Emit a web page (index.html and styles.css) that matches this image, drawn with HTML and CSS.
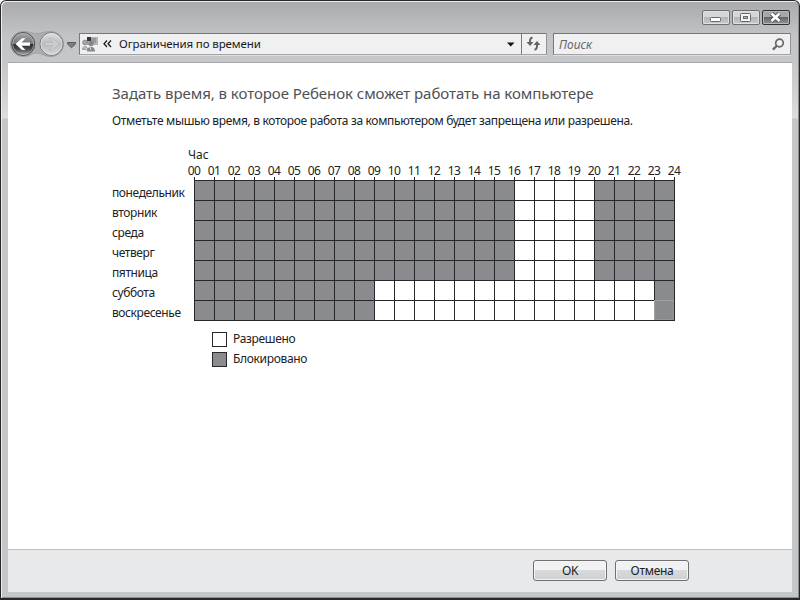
FILE: index.html
```html
<!DOCTYPE html>
<html lang="ru">
<head>
<meta charset="utf-8">
<title>Ограничения по времени</title>
<link rel="stylesheet" href="styles.css">
</head>
<body>
<div class="window">
  <header class="titlebar">
    <div class="caption">
      <button class="cap"><svg width="28" height="15"><rect x="8.500" y="7.500" width="10" height="4" rx="1" fill="#fff" stroke="#66676a"/></svg></button>
      <button class="cap"><svg width="28" height="15"><rect x="8.500" y="3.500" width="10" height="8" rx="1" fill="#f4f4f5" stroke="#66676a"/><rect x="11.500" y="6.500" width="4" height="2" fill="#bbb" stroke="#66676a"/></svg></button>
      <button class="cap close"><svg width="28" height="15"><path d="M9.500 3.500 17.500 11M17.500 3.500 9.500 11" stroke="#55565a" stroke-width="4.500"/><path d="M9.500 3.500 17.500 11M17.500 3.500 9.500 11" stroke="#fff" stroke-width="2.600"/></svg></button>
    </div>
    <div class="navbar">
      <svg class="nav" width="70" height="28" viewBox="8 30 70 28">
        <defs>
          <linearGradient id="back" x2="0" y2="1"><stop offset="0" stop-color="#a5a6a9"/><stop offset=".48" stop-color="#77787c"/><stop offset=".5" stop-color="#252629"/><stop offset=".75" stop-color="#515256"/><stop offset="1" stop-color="#b5b6b9"/></linearGradient>
          <linearGradient id="fwd" x2="0" y2="1"><stop offset="0" stop-color="#dedfe0"/><stop offset=".5" stop-color="#bcbdbf"/><stop offset="1" stop-color="#d6d7d9"/></linearGradient>
        </defs>
        <path d="M23 31.500C30 31.500 32 33.500 37 33.500S44 31.500 51 31.500A12.500 12.500 0 0 1 51 56.500C44 56.500 42 53 37 53S30 56.500 23 56.500A12.500 12.500 0 0 1 23 31.500Z" fill="#adaeb1" stroke="#9fa0a3"/>
        <circle cx="23.200" cy="44" r="11.500" fill="url(#back)" stroke="#4e4f53"/>
        <circle cx="23.200" cy="44" r="10.500" fill="none" stroke="#c4c5c8" stroke-opacity=".6"/>
        <circle cx="51.500" cy="44" r="11.500" fill="url(#fwd)" stroke="#77787b"/>
        <circle cx="51.500" cy="44" r="10.500" fill="none" stroke="#e4e4e5" stroke-opacity=".8"/>
        <path d="M15.500 44 22 38.300H25.500L21.500 42.500H30V45.700H21.500L25.500 50H22Z" fill="#fff"/>
        <path d="M59 44 52.500 38.300H49L53 42.500H44.500V45.700H53L49 50H52.500Z" fill="#cdced0" stroke="#b2b3b5" stroke-width=".7"/>
        <path d="M67.500 42.500H75.500V44L71.500 47.700 67.500 44Z" fill="#7d7e81" stroke="#595a5e"/>
      </svg>
      <div class="address">
        <svg class="users" width="18" height="17" viewBox="0 0 18 17"><rect x="6" y="1" width="11" height="8" fill="#b4b5b8"/><rect x="9" y="2" width="6" height="5" fill="#97989b"/><path d="M6 1H10V5H6Z" fill="#333438"/><circle cx="4" cy="6.500" r="2.500" fill="#a2a3a6" stroke="#85868a" stroke-width=".7"/><circle cx="10" cy="7.500" r="2.600" fill="#85868a"/><path d="M1 14C1 8.500 7 8.500 7.500 14Z" fill="#a2a3a6"/><path d="M6 15.500C6 9 14 9 14 15.500Z" fill="#85868a"/><path d="M3 10.500 5 13 7 11M9 11 10 14" stroke="#d6d7d9" fill="none"/></svg>
        <svg class="chev" width="9" height="8"><path d="M4 .5 1 3.700 4 7M8 .5 5 3.700 8 7" fill="none" stroke="#222" stroke-width="1.300"/></svg>
        <span class="crumb">Ограничения по времени</span>
        <svg class="drop" width="8" height="5"><path d="M0 .5H7.500L3.750 4.500Z" fill="#111"/></svg>
        <span class="refresh"><svg width="16" height="16" viewBox="0 0 16 16"><path d="M6.500 1.500Q4 2 4 5V7" fill="none" stroke="#626367" stroke-width="1.900"/><path d="M.5 6H7.500L4 10Z" fill="#626367"/><path d="M8.500 13.700Q11 13.500 11 10V8" fill="none" stroke="#626367" stroke-width="1.900"/><path d="M7.500 9H14.500L11 5Z" fill="#626367"/></svg></span>
      </div>
      <div class="search"><span>Поиск</span><svg width="14" height="14" viewBox="0 0 14 14"><circle cx="8.500" cy="5" r="3.800" fill="#f3f3f4" stroke="#67686c" stroke-width="1.700"/><path d="M5.800 7.700 1.900 11.600" stroke="#67686c" stroke-width="2.300"/></svg></div>
    </div>
  </header>
  <main class="page">
    <h1>Задать время, в которое Ребенок сможет работать на компьютере</h1>
    <p class="hint">Отметьте мышью время, в которое работа за компьютером будет запрещена или разрешена.</p>
    <div class="axis">Час</div>
    <div class="hours" id="hours"></div>
    <div class="schedule">
      <div class="days"><span>понедельник</span><span>вторник</span><span>среда</span><span>четверг</span><span>пятница</span><span>суббота</span><span>воскресенье</span></div>
      <div>
        <div class="ticks" id="ticks"></div>
        <div class="grid" id="grid"></div>
      </div>
    </div>
    <div class="legend"><i></i><span>Разрешено</span></div>
    <div class="legend"><i class="blocked"></i><span>Блокировано</span></div>
  </main>
  <footer class="actions"><button class="btn">OK</button><button class="btn">Отмена</button></footer>
</div>
<script src="schedule.js"></script>
</body>
</html>
```
FILE: schedule.js
```js
const allowed = [[16, 20], [16, 20], [16, 20], [16, 20], [16, 20], [9, 23], [9, 23]];
const add = (id, cls, text) => {
  const el = document.createElement('span');
  el.className = cls;
  if (text) el.textContent = text;
  document.getElementById(id).append(el);
};
for (let h = 0; h <= 24; h++) {
  add('hours', 'hour', String(h).padStart(2, '0'));
  add('ticks', 'tick');
}
allowed.forEach(([from, to], day) => {
  for (let h = 0; h < 24; h++) {
    const open = h >= from && h < to;
    const focus = day === 6 && h === 23;
    add('grid', 'cell' + (open ? '' : ' blocked') + (focus ? ' focus' : ''));
  }
});
```
FILE: styles.css
```css
* { box-sizing: border-box; }
body {
  margin: 0;
  background: #fff;
  font: 12px/16px "Noto Sans", "Open Sans", sans-serif;
  color: #222225;
}
button { font: inherit; color: inherit; padding: 0; }
svg { display: block; flex: none; }
.window {
  width: 800px;
  height: 600px;
  display: flex;
  flex-direction: column;
  padding: 1px 7px 6px;
  border: 1px solid #29272b;
  border-bottom-width: 2px;
  border-radius: 6px 6px 0 0;
  background: linear-gradient(#a9aaad 0, #c3c4c6 36px, #c6c7c9 60px, #cfd0d1 90px, #dcddde 117px, #c5c6c8 118px);
  box-shadow: inset 1px 1px #eeeeef, inset -1px -1px #8d8e91;
}
.titlebar { height: 61px; flex: none; border-bottom: 1px solid #a9aaad; }
.caption { display: flex; justify-content: flex-end; gap: 2px; padding: 8px 2px 0 0; height: 24px; }
.cap {
  width: 28px;
  height: 15px;
  border: 1px solid #6d6e72;
  border-radius: 2px;
  background: linear-gradient(#d5d6d8 45%, #b4b5b8 50%, #c9cacc);
  box-shadow: inset 0 0 0 1px #dfe0e1;
}
.cap svg { margin: -1px; }
.cap.close { border-color: #303135; background: linear-gradient(#a5a6a9 45%, #66676b 50%, #929397); box-shadow: inset 0 0 0 1px #b8b9bb; }
.navbar { display: flex; padding-top: 4px; }
.nav { margin-right: 1px; }
.address, .search {
  display: flex;
  align-items: center;
  height: 22px;
  margin-top: 3px;
  border: 1px solid #77787b;
  border-right-color: #909194;
  border-bottom-color: #a2a3a6;
  background: #f0f0f1;
  box-shadow: 0 1px #dedfe0;
}
.address { width: 468px; }
.users { margin-left: 1px; }
.chev { margin-left: 4px; }
.crumb { margin-left: 7px; font-size: 11.500px; letter-spacing: -0.12px; color: #19191b; }
.drop { margin-left: auto; }
.refresh { display: flex; margin-left: 6px; width: 25px; height: 20px; padding: 2px 0 0 4px; border-left: 1px solid #77787b; }
.search { width: 238px; margin-left: 6px; padding: 1px 5px 0; justify-content: space-between; font-style: italic; color: #66676b; }
.page { flex: 1; background: #fff; padding: 19px 0 0 104px; }
h1 { margin: 0; font-size: 15px; line-height: 22px; font-weight: 400; letter-spacing: -0.05px; color: #505155; white-space: nowrap; }
.hint { margin: 9px 0 0; letter-spacing: -0.33px; white-space: nowrap; }
.axis { margin: 18px 0 0 76px; height: 16px; line-height: 15px; }
.hours { display: flex; margin-left: 72px; height: 14px; line-height: 15px; letter-spacing: -0.5px; }
.hour { width: 20px; flex: none; text-align: center; }
.schedule { display: flex; }
.days { width: 82px; display: flex; flex-direction: column; padding-top: 5px; letter-spacing: -0.4px; }
.days span { height: 20px; line-height: 21px; }
.ticks { display: flex; height: 3px; }
.tick { width: 20px; flex: none; border-left: 1px solid #29272b; }
.tick:last-child { width: 1px; }
.grid {
  display: grid;
  grid-template-columns: repeat(24, 20px);
  grid-auto-rows: 20px;
  width: 481px;
  border: solid #29272b;
  border-width: 0 1px 1px 0;
}
.cell { border: solid #29272b; border-width: 1px 0 0 1px; background: #fff; }
.blocked { background: #8a8b8e; }
.cell.focus { border-color: #a0a1a4; box-shadow: inset -1px -1px #96979a; }
.legend { display: flex; align-items: center; height: 20px; margin-left: 100px; gap: 6px; letter-spacing: -0.33px; }
.schedule + .legend { margin-top: 7px; }
.legend i { width: 15px; height: 15px; border: 1px solid #29272b; }
.actions {
  height: 43px;
  flex: none;
  display: flex;
  justify-content: flex-end;
  gap: 8px;
  padding: 10px 103px 0 0;
  background: #e8e9eb;
  border-top: 1px solid #bcbdbf;
}
.btn {
  width: 74px;
  height: 21px;
  border: 1px solid #6f7074;
  border-radius: 3px;
  background: linear-gradient(#f1f1f2 45%, #d8d9db 50%, #cfd0d2);
  box-shadow: inset 0 0 0 1px #f5f5f6;
  line-height: 18px;
  letter-spacing: -0.3px;
}
```
